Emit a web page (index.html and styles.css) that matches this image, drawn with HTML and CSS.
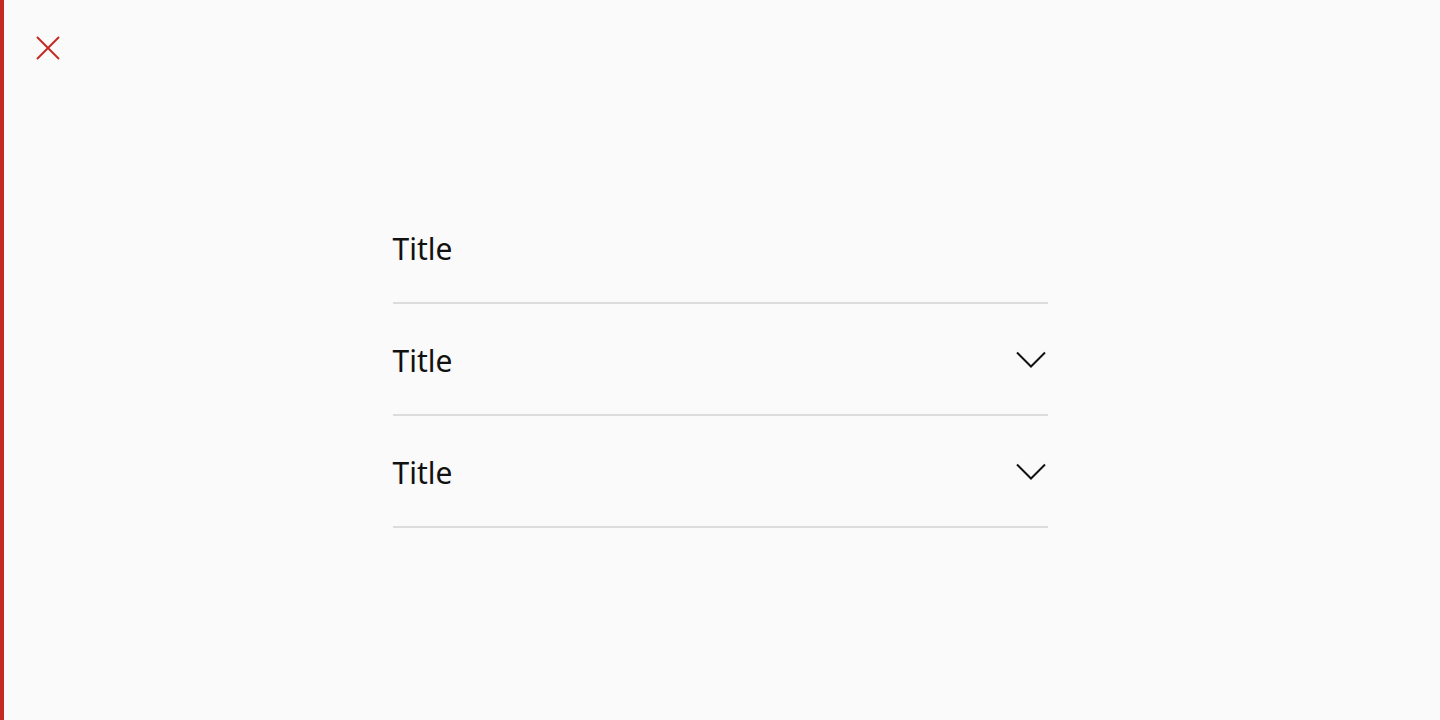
FILE: index.html
```html
<!DOCTYPE html>
<html lang="en">
<head>
  <meta charset="UTF-8">
  <meta name="viewport" content="width=device-width, initial-scale=1.0">
  <title>Menu</title>
  <link rel="stylesheet" href="styles.css">
</head>
<body>

  <div class="panel">
    <!-- Close button -->
    <button class="close-btn" aria-label="Close">
      <svg width="24" height="24" viewBox="0 0 24 24">
        <path d="M1 1 L23 23 M23 1 L1 23" stroke="#c42a22" stroke-width="2" fill="none"/>
      </svg>
    </button>

    <ul class="menu-list">
      <li class="menu-item">
        <span class="menu-title">Title</span>
      </li>
      <li class="menu-item">
        <span class="menu-title">Title</span>
        <svg class="chevron" width="30" height="18" viewBox="0 0 30 18">
          <path d="M1 1.5 L15 15.5 L29 1.5" stroke="#111" stroke-width="2" fill="none"/>
        </svg>
      </li>
      <li class="menu-item">
        <span class="menu-title">Title</span>
        <svg class="chevron" width="30" height="18" viewBox="0 0 30 18">
          <path d="M1 1.5 L15 15.5 L29 1.5" stroke="#111" stroke-width="2" fill="none"/>
        </svg>
      </li>
    </ul>
  </div>

</body>
</html>
```

FILE: styles.css
```css
body {
  margin: 0;
  background: #fafafa;
  font-family: "Noto Sans", Arial, sans-serif;
  color: #111;
  box-shadow: inset 4px 0 0 #c42a22; /* red edge on the left */
}

.panel {
  min-height: 720px;
  padding-top: 36px;
  box-sizing: border-box;
}

.close-btn {
  display: block;
  width: 24px;
  height: 24px;
  margin-left: 36px;
  padding: 0;
  border: none;
  background: none;
  cursor: pointer;
}

.close-btn svg {
  display: block;
}

.menu-list {
  list-style: none;
  margin: 132px auto 0 auto;
  padding: 0;
  width: 655px;
}

.menu-item {
  display: flex;
  justify-content: space-between;
  align-items: center;
  height: 110px;
  border-bottom: 2px solid #dcdcdc;
}

.menu-title {
  font-size: 30px;
  line-height: 1;
  padding-top: 4px;
}

.chevron {
  margin-right: 2px;
  margin-top: 2px;
}
```
